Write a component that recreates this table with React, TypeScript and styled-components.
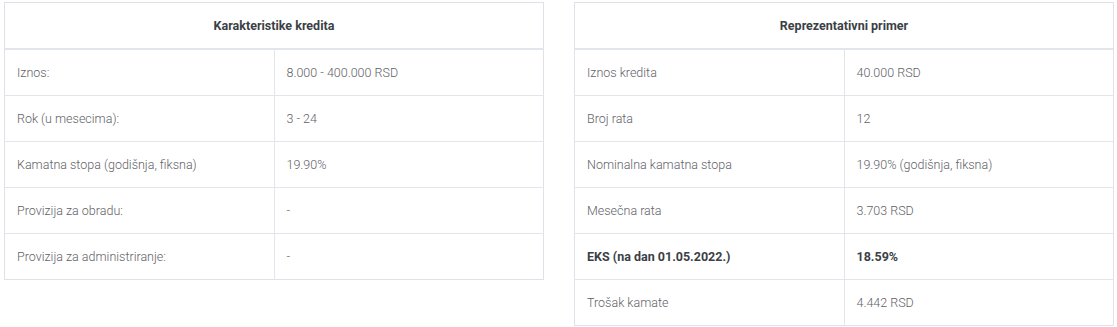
import React from "react";
import styled, { createGlobalStyle } from "styled-components";

const GlobalStyle = createGlobalStyle`
  body {
    margin: 0;
    background: #fff;
    font-family: Roboto, "Open Sans", sans-serif;
  }
`;

const Page = styled.div`
  display: grid;
  grid-template-columns: 540px 540px;
  column-gap: 30px;
  align-items: start;
  padding: 2px 0 0 4px;
`;

const Table = styled.table`
  width: 100%;
  border-collapse: collapse;
  table-layout: fixed;
  border: 1px solid #e1e0e8;
`;

const HeadCell = styled.th`
  height: 45px;
  padding: 0;
  border-bottom: 2px solid #e2e5e9;
  font-size: 12.5px;
  font-weight: 700;
  color: #3b3f46;
  text-align: center;
`;

const Cell = styled.td<{ $bold?: boolean }>`
  height: 45px;
  padding: 0 12px;
  border-top: 1px solid #e2e5e9;
  border-right: 1px solid #e2e5e9;
  font-size: 12.5px;
  font-weight: ${(p) => (p.$bold ? 700 : 300)};
  color: ${(p) => (p.$bold ? "#3b3f46" : "#5f6267")};
  &:last-child {
    border-right: none;
  }
`;

type Row = { label: string; value: string; bold?: boolean };

const characteristics: Row[] = [
  { label: "Iznos:", value: "8.000 - 400.000 RSD" },
  { label: "Rok (u mesecima):", value: "3 - 24" },
  { label: "Kamatna stopa (godišnja, fiksna)", value: "19.90%" },
  { label: "Provizija za obradu:", value: "-" },
  { label: "Provizija za administriranje:", value: "-" },
];

const example: Row[] = [
  { label: "Iznos kredita", value: "40.000 RSD" },
  { label: "Broj rata", value: "12" },
  { label: "Nominalna kamatna stopa", value: "19.90% (godišnja, fiksna)" },
  { label: "Mesečna rata", value: "3.703 RSD" },
  { label: "EKS (na dan 01.05.2022.)", value: "18.59%", bold: true },
  { label: "Trošak kamate", value: "4.442 RSD" },
];

const InfoTable = ({ title, rows }: { title: string; rows: Row[] }) => (
  <Table>
    <thead>
      <tr>
        <HeadCell colSpan={2}>{title}</HeadCell>
      </tr>
    </thead>
    <tbody>
      {rows.map((r) => (
        <tr key={r.label}>
          <Cell $bold={r.bold}>{r.label}</Cell>
          <Cell $bold={r.bold}>{r.value}</Cell>
        </tr>
      ))}
    </tbody>
  </Table>
);

const App = () => (
  <>
    <GlobalStyle />
    <Page>
      <InfoTable title="Karakteristike kredita" rows={characteristics} />
      <InfoTable title="Reprezentativni primer" rows={example} />
    </Page>
  </>
);

export default App;
